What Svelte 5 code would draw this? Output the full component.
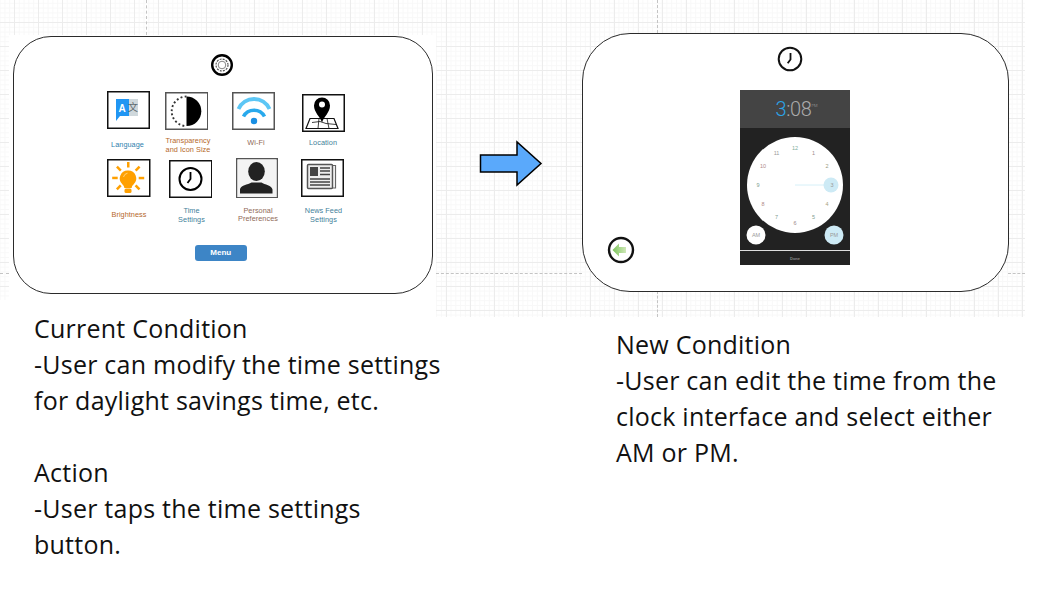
<script>
  // diagram nodes, coordinates are canvas pixels
  const tiles = [
    { id: 'language', x: 107, y: 91, w: 43, h: 38, dark: true, label: ['Language'], lx: 127.5, ly: 141, color: '#2f7fae' },
    { id: 'contrast', x: 164.5, y: 92, w: 43.5, h: 38, label: ['Transparency', 'and Icon Size'], lx: 188, ly: 137, color: '#b5682c' },
    { id: 'wifi', x: 232, y: 92, w: 43, h: 38, label: ['Wi-Fi'], lx: 256, ly: 139, color: '#8f6a58' },
    { id: 'location', x: 302, y: 93.5, w: 43, h: 38, dark: true, label: ['Location'], lx: 323, ly: 139, color: '#3f7f9a' },
    { id: 'bright', x: 107, y: 159, w: 43.5, h: 38, dark: true, label: ['Brightness'], lx: 129, ly: 210.5, color: '#b5682c' },
    { id: 'time', x: 168.5, y: 160, w: 43.5, h: 38, dark: true, label: ['Time', 'Settings'], lx: 191.5, ly: 207, color: '#3f7f9a' },
    { id: 'person', x: 235.5, y: 157.5, w: 42, h: 40.5, label: ['Personal', 'Preferences'], lx: 258, ly: 206.5, color: '#8f6a58' },
    { id: 'news', x: 301, y: 159, w: 43, h: 38, dark: true, label: ['News Feed', 'Settings'], lx: 323.5, ly: 207, color: '#3f7f9a' }
  ];

  const hours = [12, 1, 2, 3, 4, 5, 6, 7, 8, 9, 10, 11];
  const tints = ['#7fae9c', '#a08a8a', '#9a9a80', '#9a9a9a', '#a8a080', '#80a090', '#a08a8a', '#80a090', '#b08a8a', '#80a090', '#b08a8a', '#9a9a9a'];
  const numX = (i) => 55 + 37 * Math.sin((i * Math.PI) / 6);
  const numY = (i) => 57 + 37.5 * -Math.cos((i * Math.PI) / 6);

  const rays = [0, 45, 90, 135, 225, 270, 315];
</script>

<div class="canvas">
  <div class="grid"></div>
  <div class="mask-left"></div>
  <div class="mask-corner"></div>
  <div class="dash-v top-a"></div>
  <div class="dash-v top-b"></div>
  <div class="dash-v bottom-b"></div>
  <div class="dash-h mid-a"></div>
  <div class="dash-h mid-b"></div>
  <div class="dash-h mid-c"></div>

  <div class="card left-card"></div>
  <div class="card right-card"></div>

  <!-- settings gear -->
  <svg class="node gear" viewBox="0 0 24 24">
    <circle cx="12" cy="12" r="9.800" fill="#fff" stroke="#000" stroke-width="2.400" />
    <circle cx="12" cy="12" r="3.800" fill="none" stroke="#777" stroke-width="0.900" />
    <circle cx="12" cy="12" r="6" fill="none" stroke="#555" stroke-width="1.200" stroke-dasharray="2 1.140" />
  </svg>

  {#each tiles as t}
    <svg class="node tile" style="left:{t.x}px;top:{t.y}px;width:{t.w}px;height:{t.h}px" viewBox="{t.x} {t.y} {t.w} {t.h}">
      <rect x={t.x + 0.75} y={t.y + 0.75} width={t.w - 1.5} height={t.h - 1.5} fill="#fff" stroke={t.dark ? '#111' : '#555'} stroke-width="1.5" />
      {#if t.id === 'language'}
        <rect x="127" y="99" width="11" height="17" fill="#cfd8dc" />
        <path d="M116 99h13v17h-9l-4 5z" fill="#2196f3" />
        <text x="122" y="112" class="glyph-a">A</text>
        <text x="133" y="111" class="glyph-zh">文</text>
      {:else if t.id === 'contrast'}
        <path d="M186 96.500a14.800 14.800 0 0 1 0 29.600z" fill="#000" />
        <path d="M186 96.500a14.800 14.800 0 0 0 0 29.600" fill="none" stroke="#333" stroke-width="1.900" stroke-dasharray="1.900 2.300" />
      {:else if t.id === 'wifi'}
        <path d="M238.500 109A17 17 0 0 1 269.500 109" fill="none" stroke="#5cc6f5" stroke-width="3.800" />
        <path d="M243.500 116.500A12 12 0 0 1 264.500 116.500" fill="none" stroke="#29a9ec" stroke-width="3.600" />
        <circle cx="254" cy="121" r="3.200" fill="#1a8fe3" />
      {:else if t.id === 'location'}
        <path d="M306 128l4-10h24l4 10z" fill="#fff" stroke="#111" stroke-width="1.200" />
        <path d="M319 118l-1 10M327 118l2 10M312 122l8-1 6 2 10 1" fill="none" stroke="#111" stroke-width="0.800" />
        <path d="M322 122c-2-6-8-10-8-17a8 8 0 0 1 16 0c0 7-6 11-8 17z" fill="#000" />
        <circle cx="322" cy="104" r="3" fill="#fff" />
      {:else if t.id === 'bright'}
        {#each rays as a}
          <rect x="127" y="162" width="2.500" height="5.500" fill="#ffa000" transform="rotate({a} 128.2 178)" />
        {/each}
        <path d="M128 170.500a8 8 0 0 0-5.500 14c1 1 1.800 2 1.800 3.500h7.400c0-1.500 .8-2.500 1.800-3.500a8 8 0 0 0-5.500-14z" fill="#ffa000" />
        <rect x="124.500" y="188.500" width="7" height="4.500" rx="1.500" fill="#ffa000" />
        <path d="M123.500 177a5 5 0 0 1 4-3.800" fill="none" stroke="#ffd27a" stroke-width="1" />
      {:else if t.id === 'time'}
        <circle cx="190" cy="179" r="11" fill="none" stroke="#000" stroke-width="2" />
        <path d="M190 172v7l-3 4" fill="none" stroke="#000" stroke-width="1.800" />
      {:else if t.id === 'person'}
        <rect x="237" y="159" width="39" height="37.500" fill="#f3f3f3" />
        <ellipse cx="256" cy="171" rx="8.300" ry="9.500" fill="#222" />
        <path d="M239.500 193v-4c0-4 8-5 11.500-7h10c3 2 10.500 3 11 7v4z" fill="#222" />
      {:else if t.id === 'news'}
        <path d="M332 165.500h3.500v22.500h-3" fill="none" stroke="#666" stroke-width="1.200" />
        <rect x="307.500" y="164.500" width="25" height="24" rx="1" fill="#eee" stroke="#555" stroke-width="1.500" />
        <rect x="310" y="167" width="8" height="9" fill="#444" />
        <path d="M320 168h10M320 171h10M320 174.500h10M310 179h20M310 182h20M310 185h20" stroke="#444" stroke-width="1.300" />
      {/if}
    </svg>
    <div class="tile-label" style="left:{t.lx}px;top:{t.ly}px;color:{t.color}">
      {#each t.label as line}<div>{line}</div>{/each}
    </div>
  {/each}

  <div class="menu-btn">Menu</div>

  <!-- arrow between screens -->
  <svg class="node arrow" viewBox="470 130 80 70">
    <path d="M480.500 155H517v-13l24 21.500-24 21.500v-13h-36.500z" fill="#5aa9fb" stroke="#000" stroke-width="1.500" />
  </svg>

  <!-- clock badge -->
  <svg class="node clock-badge" viewBox="0 0 26 26">
    <circle cx="13" cy="13" r="11.300" fill="#fff" stroke="#111" stroke-width="2" />
    <path d="M13.500 7v6.500l-2.800 3.700" fill="none" stroke="#111" stroke-width="1.800" />
  </svg>

  <div class="phone">
    <div class="phone-head">
      <span class="big"><span class="hour">3</span>:08</span><span class="ampm">PM</span>
    </div>
    <svg class="phone-face" viewBox="0 0 110 122">
      <circle cx="55" cy="57" r="48" fill="#fff" />
      <path d="M55 57h34" stroke="#d6f0f8" stroke-width="1" />
      <circle cx="91" cy="57" r="7.500" fill="#cdeaf5" />
      {#each hours as h, i}
        <text x={numX(i)} y={numY(i) + 2} class="num" style="fill:{tints[i]}">{h}</text>
      {/each}
      <circle cx="16" cy="107" r="9.500" fill="#fff" />
      <text x="16" y="109" class="ap">AM</text>
      <circle cx="94" cy="107" r="9.500" fill="#cdeaf5" />
      <text x="94" y="109" class="ap">PM</text>
    </svg>
    <div class="phone-foot">Done</div>
  </div>

  <!-- back button -->
  <svg class="node back" viewBox="0 0 28 28">
    <defs>
      <linearGradient id="backFill" x1="0" x2="1" y1="0" y2="0">
        <stop offset="0" stop-color="#7cc45c" />
        <stop offset="1" stop-color="#cfe8b8" />
      </linearGradient>
    </defs>
    <circle cx="14" cy="14" r="12" fill="#fff" stroke="#111" stroke-width="2.400" />
    <path d="M5.500 14l6.500-6.500V11H19v6h-7v3.500z" fill="url(#backFill)" />
  </svg>

  <div class="note note-left">
    Current Condition<br />
    -User can modify the time settings<br />
    for daylight savings time, etc.<br />
    <br />
    Action<br />
    -User taps the time settings<br />
    button.
  </div>

  <div class="note note-right">
    New Condition<br />
    -User can edit the time from the<br />
    clock interface and select either<br />
    AM or PM.
  </div>
</div>

<style>
  :global(body) {
    margin: 0;
    background: #fff;
  }

  .canvas {
    position: relative;
    width: 1041px;
    height: 601px;
    overflow: hidden;
    background: #fff;
    font-family: "Liberation Sans", Arial, sans-serif;
  }

  .grid {
    position: absolute;
    left: 0;
    top: 0;
    width: 1025px;
    height: 317px;
    background-color: #fff;
    background-image:
      linear-gradient(to right, #ececec 1px, transparent 1px),
      linear-gradient(to bottom, #ececec 1px, transparent 1px),
      linear-gradient(to right, #f8f8f8 1px, transparent 1px),
      linear-gradient(to bottom, #f8f8f8 1px, transparent 1px);
    background-size: 24px 24px, 24px 24px, 4.8px 4.8px, 4.8px 4.8px;
    background-position: 14px 22px, 14px 22px, 14px 22px, 14px 22px;
  }

  .mask-left {
    position: absolute;
    left: 9px;
    top: 35px;
    width: 427px;
    height: 282px;
    background: #fff;
  }

  .mask-corner {
    position: absolute;
    left: 0;
    top: 300px;
    width: 10px;
    height: 17px;
    background: #fff;
  }

  .dash-v {
    position: absolute;
    width: 0;
    border-left: 1px dashed #c4c4c4;
  }
  .top-a { left: 146px; top: 0; height: 35px; }
  .top-b { left: 657px; top: 0; height: 33px; }
  .bottom-b { left: 657px; top: 291px; height: 26px; }

  .dash-h {
    position: absolute;
    height: 0;
    top: 273px;
    border-top: 1px dashed #c4c4c4;
  }
  .mid-a { left: 0; width: 9px; }
  .mid-b { left: 436px; width: 146px; }
  .mid-c { left: 1008px; width: 17px; }

  .card {
    position: absolute;
    box-sizing: border-box;
    background: #fff;
    border: 1.5px solid #2b2b2b;
  }
  .left-card {
    left: 13px;
    top: 35.500px;
    width: 420px;
    height: 258px;
    border-radius: 38px;
  }
  .right-card {
    left: 581.500px;
    top: 33px;
    width: 427px;
    height: 258.500px;
    border-radius: 48px;
  }

  .node {
    position: absolute;
    display: block;
  }
  .gear { left: 210px; top: 53px; width: 24px; height: 24px; }
  .arrow { left: 470px; top: 130px; width: 80px; height: 70px; }
  .clock-badge { left: 777px; top: 46px; width: 26px; height: 26px; }
  .back { left: 607px; top: 236px; width: 28px; height: 28px; }

  .glyph-a {
    font: bold 10px "Liberation Sans", sans-serif;
    fill: #fff;
    text-anchor: middle;
  }
  .glyph-zh {
    font: 10px "Noto Sans CJK SC", sans-serif;
    fill: #5f6b70;
    text-anchor: middle;
  }

  .tile-label {
    position: absolute;
    transform: translateX(-50%);
    font-size: 7.300px;
    line-height: 8.500px;
    letter-spacing: 0.05px;
    text-align: center;
    white-space: nowrap;
  }

  .menu-btn {
    position: absolute;
    left: 195px;
    top: 244.500px;
    width: 51.500px;
    height: 16.500px;
    display: flex;
    align-items: center;
    justify-content: center;
    border-radius: 3px;
    background: #3d85c6;
    color: #fff;
    font-size: 8px;
    font-weight: bold;
  }

  .phone {
    position: absolute;
    left: 740px;
    top: 90px;
    width: 110px;
    height: 175px;
    display: flex;
    flex-direction: column;
    background: #222;
  }
  .phone-head {
    height: 38px;
    padding-left: 3px;
    display: flex;
    align-items: center;
    justify-content: center;
    background: #444;
    color: #aaa;
    font-family: Roboto, sans-serif;
    font-weight: 300;
  }
  .big {
    font-size: 20px;
    letter-spacing: -0.4px;
  }
  .hour { color: #2ba3e6; }
  .ampm {
    font-size: 4px;
    align-self: flex-start;
    margin-top: 13px;
  }
  .phone-face {
    display: block;
    width: 110px;
    height: 122px;
  }
  .num {
    font-size: 5.500px;
    text-anchor: middle;
  }
  .ap {
    font-size: 5.500px;
    fill: #999;
    text-anchor: middle;
  }
  .phone-foot {
    flex: 1;
    display: flex;
    align-items: center;
    justify-content: center;
    border-top: 1px solid #ddd;
    color: #888;
    font-size: 4px;
    font-weight: bold;
  }

  .note {
    position: absolute;
    font-family: "Open Sans", sans-serif;
    font-size: 25px;
    letter-spacing: 0.24px;
    line-height: 36px;
    color: #111;
    white-space: nowrap;
  }
  .note-left { left: 34px; top: 310px; }
  .note-right { left: 616px; top: 326px; }
</style>
